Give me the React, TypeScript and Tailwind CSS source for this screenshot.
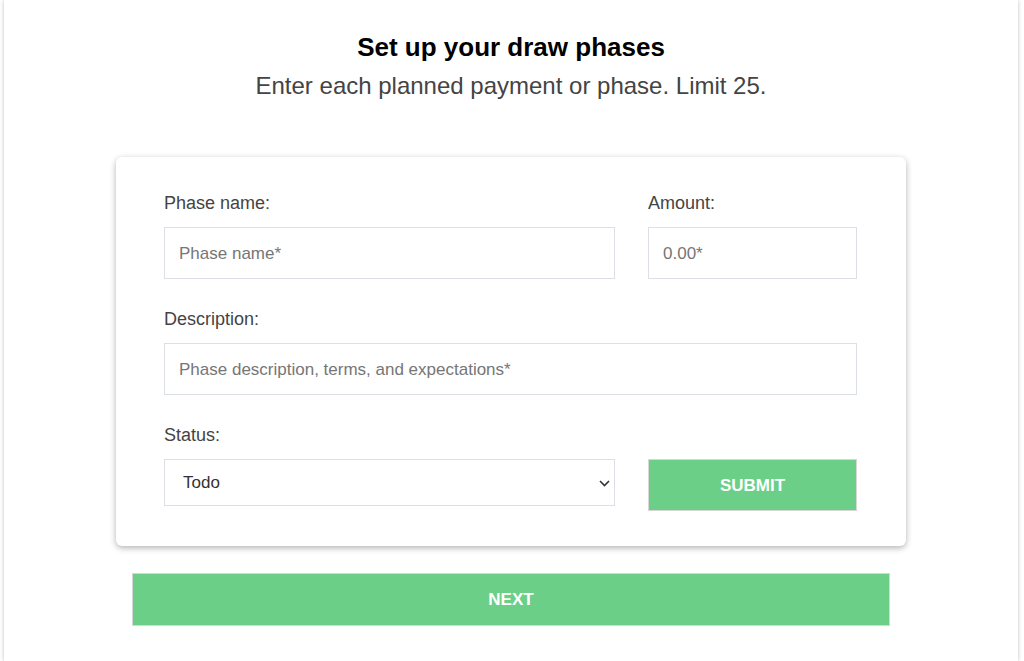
import React from 'react';

const labelCls = 'block text-[18px] leading-6 text-[#444] mb-3';
const inputCls =
  'w-full h-[52px] border border-[#dce0e6] px-[14px] pt-[1px] text-[17px] text-[#333] placeholder:text-[#767676] outline-none';

const App: React.FC = () => {
  return (
    <div className="min-h-[661px] bg-white font-['Liberation_Sans',Arial,sans-serif]">
      <div className="ml-[4px] w-[1014px] min-h-[661px] bg-white shadow-[0_0_4px_rgba(0,0,0,0.25)] pt-[31px]">
        <div className="text-center">
          <h1 className="text-[26px] leading-8 font-bold text-black">Set up your draw phases</h1>
          <p className="text-[24px] leading-8 text-[#444] mt-[7px]">
            Enter each planned payment or phase. Limit 25.
          </p>
        </div>

        <div className="mx-auto mt-[55px] w-[790px] bg-white rounded-md shadow-[0_2px_6px_rgba(0,0,0,0.3)] pt-[34px] pb-[35px] pl-[48px] pr-[49px]">
          <div className="grid grid-cols-[451px_209px] gap-x-[33px]">
            <div>
              <label className={labelCls}>Phase name:</label>
              <input className={inputCls} placeholder="Phase name*" />
            </div>
            <div>
              <label className={labelCls}>Amount:</label>
              <input className={inputCls} placeholder="0.00*" />
            </div>
          </div>

          <div className="mt-[28px]">
            <label className={labelCls}>Description:</label>
            <input className={inputCls} placeholder="Phase description, terms, and expectations*" />
          </div>

          <div className="mt-[28px] grid grid-cols-[451px_209px] gap-x-[33px]">
            <div>
              <label className={labelCls}>Status:</label>
              <div className="relative">
                <select className="w-full h-[47px] appearance-none border border-[#dce0e6] pl-[18px] pt-[1px] text-[17px] text-[#333] bg-white outline-none">
                  <option>Todo</option>
                  <option>In progress</option>
                  <option>Done</option>
                </select>
                <svg
                  className="absolute right-[5px] top-[21px] pointer-events-none"
                  width="11"
                  height="7"
                  viewBox="0 0 11 7"
                  fill="none"
                >
                  <path d="M1 1l4.5 4.5L10 1" stroke="#333" strokeWidth="1.6" />
                </svg>
              </div>
            </div>
            <div className="pt-[36px]">
              <button className="w-full h-[52px] pt-[2px] bg-[#6bcf88] border border-[#d6d6d6] text-white font-bold text-[17px] uppercase">
                Submit
              </button>
            </div>
          </div>
        </div>

        <div className="mx-auto mt-[27px] w-[758px]">
          <button className="w-full h-[53px] bg-[#6bcf88] border border-[#d6d6d6] text-white font-bold text-[17px] uppercase">
            Next
          </button>
        </div>
      </div>
    </div>
  );
};

export default App;
